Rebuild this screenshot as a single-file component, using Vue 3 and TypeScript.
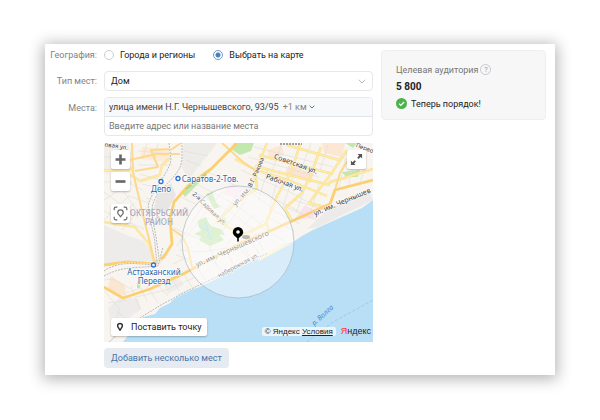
<script setup lang="ts">
import { ref } from 'vue'

const mode = ref<'cities' | 'map'>('map')
const placeType = ref('Дом')
const query = ref('')

const blocks: { d: string; fill: string }[] = [
  { d: 'M0 0H24L28 28 10 34 0 30Z', fill: '#f2efeb' },
  { d: 'M0 82L22 92 40 98 52 118 0 121Z', fill: '#eeecea' },
  { d: 'M54 48L67 40 72 52 62 70 50 66Z', fill: '#e7e6e5' },
  { d: 'M80 0H113L84 37 76 20Z', fill: '#eeece9' },
  { d: 'M7 133L21 142 22 153 3 147Z', fill: '#fbe6d2' },
  { d: 'M58 137L72 130 80 142 64 151Z', fill: '#f0eeea' },
  { d: 'M4 165L17 153 34 156 37 166 8 187Z', fill: '#edecea' },
  { d: 'M163 7L178 2 180 13 166 17Z', fill: '#fce8d6' },
  { d: 'M187 17L211 25 207 40 181 30Z', fill: '#fbe5d2' },
  { d: 'M218 0H241L238 14 220 10Z', fill: '#fbe7d4' },
  { d: 'M190 77L201 62 214 69 209 75Z', fill: '#f8e3ed' },
  { d: 'M226 65L266 50 269 57 214 84 203 86Z', fill: '#ecebea' },
  { d: 'M118 50L128 41 145 48 139 58Z', fill: '#f8e6ee' },
  { d: 'M38 4L68 6 64 19 36 16Z', fill: '#fdebd8' }
]

const parks: string[] = [
  'M93 78L102 74 106 83 117 86 121 92 110 91 101 95 90 91 98 87Z',
  'M94 82L103 78 112 88 120 97 106 103 95 97 99 91Z',
  'M102 51L108 49 112 59 116 64 110 66Z',
  'M114 77L121 75 123 83 117 82Z',
  'M238 29L256 27 254 34 242 34Z',
  'M241 0H253L249 5Z',
  'M130 0H150L147 8 136 12 127 6Z',
  'M33 139L37 136 36 145 33 145Z',
  'M78 50L100 29 103 32 81 54Z'
]

const streets: string[] = [
  'M0 39L22 38 38 47M0 57L28 39M0 68L40 86M0 77L25 53 45 60M9 34L32 66M0 49L34 74M10 84L30 60M18 87L38 63',
  'M36 31L56 37M38 41L56 45M42 55L55 59M34 8L71 11M43 0L39 16M54 0L51 15M34 22L68 22M8 0L20 12 17 28M0 14L26 15',
  'M80 8L104 13M82 17L97 23M75 53L112 71 142 91M83 45L127 69 151 88M91 40L132 62 158 82M104 29L149 51 169 66',
  'M80 97L119 48M93 103L133 53M104 108L141 58M117 108L151 70M129 110L160 77M73 103L109 47M70 85L90 94 113 99',
  'M76 107L97 109 123 105M72 112L98 121M69 121L81 115 92 127M76 96L83 109M105 103L113 125M122 106L129 121M137 98L145 113M151 91L159 107',
  'M137 27L158 37 184 48 211 63M137 43L172 57 195 68M153 23L145 48M164 26L154 58M176 27L165 67M190 31L178 66M204 37L192 70M216 38L207 68',
  'M144 14L215 34M150 4L229 24M178 0L166 35M207 0L197 27M224 2L216 27M235 14L262 22M241 17L235 45M250 18L244 44M262 20L256 40M226 38L268 27',
  'M190 57L220 67M184 65L213 77M165 75L190 88M170 68L196 81M158 84L181 99M147 98L158 115M136 105L148 120M109 116L121 132',
  'M22 150L37 145 43 158M27 143L36 166M43 143L54 160M53 141L64 153M67 134L75 148M78 128L88 144M94 125L101 137M32 154L62 147 94 133',
  'M0 147L16 167 8 187M12 168L29 181M4 160L23 157M8 136L27 146M0 137L9 136'
]

const roads: string[] = [
  'M0 27L22 29 30 24M22 29L36 38 56 32 58 22 66 15',
  'M0 79L31 84 45 101 51 121',
  'M151 25L153 45 133 59 118 74 113 80M97 60L122 83 138 91',
  'M163 0L153 25 151 40',
  'M131 16L152 27 184 37 223 53',
  'M151 23L177 30 226 42',
  'M155 12L229 31',
  'M196 1L188 27 173 53 162 80 166 88',
  'M217 4L206 34 197 51 181 65 188 78',
  'M243 7L229 28 205 60 225 65',
  'M183 2L235 17',
  'M138 92L162 81',
  'M224 40L269 26'
]

const arteries: string[] = [
  'M28 0L29 29 38 68 46 100 51 121',
  'M26 17L52 11 76 11M31 28L54 24 47 7 68 6 77 0',
  'M118 0L139 19 152 28',
  'M68 86L78 93 84 105 88 124',
  'M231 47L236 30 246 14'
]

const highways: string[] = [
  'M133 0L107 26 84 43 70 59 66 75 68 101 61 112 51 121',
  'M-4 142L19 155 46 146 79 131 105 117 137 100 166 88 188 78 226 61 231 47 269 37',
  'M0 122L23 119 50 121 61 113'
]

const railways: string[] = [
  'M78 -1V17C76 34 57 42 50 58C45 69 51 83 53 101L56 121',
  'M65 0L67 17C65 29 52 42 45 59C42 70 50 86 51 101L53 121',
  'M0 128C16 117 34 121 51 122',
  'M0 133C18 123 33 125 54 123L59 104',
  'M5 199L26 181 57 162 87 146 136 123 164 110'
]

const stations = [
  { x: 57, y: 38.5, lines: [{ text: 'Депо', x: 57, y: 48.5 }] },
  { x: 74, y: 35.5, lines: [{ text: 'Саратов-2-Тов.', x: 106, y: 38.5 }] },
  {
    x: 49.5,
    y: 122,
    lines: [
      { text: 'Астраханский', x: 50, y: 132 },
      { text: 'Переезд', x: 50, y: 141 }
    ]
  }
]

const streetNames = [
  { text: 'Советская ул.', x: 191, y: 23, angle: 20, size: 7 },
  { text: 'Рабочая ул.', x: 180, y: 42, angle: 20, size: 7 },
  { text: 'В.Г. Ракова', x: 154, y: 30, angle: -66, size: 6 },
  { text: 'ул. им.', x: 139, y: 55, angle: -48, size: 7 },
  { text: '2-я Садовая ул.', x: 104, y: 67, angle: 44, size: 6 },
  { text: 'ул. им. Чернышев', x: 239, y: 61, angle: -23, size: 7 },
  { text: 'ул. им. Чернышевского', x: 129, y: 108, angle: -24, size: 7 },
  { text: 'набережная ул.', x: 135, y: 124, angle: -28, size: 6 },
  { text: 'Перво', x: 260, y: 7, angle: 20, size: 6 },
  { text: 'овая ул.', x: 12, y: 5, angle: 8, size: 6 }
]
</script>

<template>
  <main class="panel">
    <form class="form" @submit.prevent>
      <span id="geo-label" class="label">География:</span>
      <div class="radios" role="radiogroup" aria-labelledby="geo-label">
        <label class="radio"><input v-model="mode" type="radio" name="geo" value="cities" />Города и регионы</label>
        <label class="radio"><input v-model="mode" type="radio" name="geo" value="map" />Выбрать на карте</label>
      </div>

      <label class="label" for="place-type">Тип мест:</label>
      <div class="select-wrap">
        <select id="place-type" v-model="placeType"><option>Дом</option></select>
        <svg class="select-arrow" viewBox="0 0 8 5"><path d="M.7.8 4 4 7.3.8" /></svg>
      </div>

      <label class="label" for="place-query">Места:</label>
      <div class="places">
        <div class="place">
          <span>улица имени Н.Г. Чернышевского, 93/95</span>
          <button type="button" class="radius">
            +1 км
            <svg viewBox="0 0 6 4"><path d="M.6.7 3 3 5.4.7" /></svg>
          </button>
        </div>
        <input id="place-query" v-model="query" type="text" placeholder="Введите адрес или название места" />
      </div>

      <section class="map">
        <svg class="canvas" viewBox="0 0 269 199" preserveAspectRatio="xMidYMid slice">
          <rect width="269" height="199" fill="#f8f5f0" />
          <path v-for="(b, i) in blocks" :key="'b' + i" :d="b.d" :fill="b.fill" />
          <path v-for="(p, i) in parks" :key="'p' + i" :d="p" fill="#c3e8ae" />
          <path d="M95 82L104 88 107 97M101 78L105 89" fill="none" stroke="#a9d8ee" stroke-width="1.500" />
          <path
            d="M269 57L258 65 231 77 209 87 198 93 189 99 179 102 164 110 136 124 106 139 93 145 85 146 73 152 66 160 56 165 51 171 39 174 30 185 19 199H269Z"
            fill="#b8dff5"
          />
          <path d="M189 100L179 102 153 115 155 118 179 105Z" fill="#fdf1c6" />
          <path v-for="(s, i) in streets" :key="'s' + i" :d="s" class="street" />
          <g v-for="(r, i) in roads" :key="'r' + i">
            <path :d="r" class="road-edge" />
            <path :d="r" class="road" />
          </g>
          <path v-for="(a, i) in arteries" :key="'a' + i" :d="a" class="artery" />
          <path v-for="(h, i) in highways" :key="'h' + i" :d="h" class="highway" />
          <path d="M82 46L102 31" fill="none" stroke="#a6cf7c" stroke-width="1.500" />
          <g v-for="(r, i) in railways" :key="'w' + i">
            <path :d="r" class="rail-bed" />
            <path :d="r" class="rail" />
          </g>
          <path d="M203 199L229 179 269 157" class="ferry" />
          <path d="M176 1H198" fill="none" stroke="#a5a29d" stroke-width="2" stroke-dasharray="2 1" />

          <text class="district" x="55" y="73">ОКТЯБРЬСКИЙ</text>
          <text class="district" x="55" y="82">РАЙОН</text>
          <text
            v-for="n in streetNames"
            :key="n.text"
            class="street-name"
            :font-size="n.size"
            :transform="`translate(${n.x} ${n.y}) rotate(${n.angle})`"
          >{{ n.text }}</text>
          <text class="river" transform="translate(220 174) rotate(-42)">р. Волга</text>

          <circle cx="134" cy="99" r="56" class="zone" />

          <g v-for="s in stations" :key="s.x">
            <circle :cx="s.x" :cy="s.y" r="2" class="stop" />
            <text v-for="l in s.lines" :key="l.text" class="station" :x="l.x" :y="l.y">{{ l.text }}</text>
          </g>

          <ellipse cx="142" cy="94" rx="4" ry="2" fill="#000" opacity=".25" />
          <path d="M134 84a5.200 5.200 0 0 1 5.200 5.200c0 3-3.500 4.800-4.400 6V98.500h-1.600v-3.300c-.9-1.200-4.400-3-4.400-6A5.200 5.200 0 0 1 134 84Z" />
          <circle cx="134" cy="89" r="1.800" fill="#fff" />
        </svg>

        <div class="zoom">
          <button type="button" class="tool" aria-label="Приблизить">
            <svg viewBox="0 0 18 18"><path d="M9 4.300v9.400M4.300 9h9.400" stroke="#666" stroke-width="2.500" /></svg>
          </button>
          <button type="button" class="tool" aria-label="Отдалить">
            <svg viewBox="0 0 18 18"><path d="M4.300 9h9.400" stroke="#666" stroke-width="2.500" /></svg>
          </button>
        </div>
        <button type="button" class="tool locate" aria-label="Показать точку">
          <svg viewBox="0 0 18 18" fill="none" stroke="#666" stroke-width="1.100">
            <path d="M3 6V4.500Q3 3 4.500 3H6M12 3h1.500Q15 3 15 4.500V6M15 12v1.500Q15 15 13.500 15H12M6 15H4.500Q3 15 3 13.500V12" />
            <path d="M9 5.600a2.600 2.600 0 0 1 2.600 2.600C11.600 9.900 9.500 10.400 9 12.400 8.500 10.400 6.400 9.900 6.400 8.200A2.600 2.600 0 0 1 9 5.600Z" />
          </svg>
        </button>
        <button type="button" class="tool expand" aria-label="Развернуть карту">
          <svg viewBox="0 0 18 18" fill="#555">
            <path d="M9.900 3.700H14.300V8.100L12.900 6.700 10.900 8.500 9.700 7.300 11.500 5.200Z" />
            <path d="M3.700 9.900V14.300H8.100L6.700 12.900 8.500 10.900 7.300 9.700 5.200 11.500Z" />
          </svg>
        </button>
        <button type="button" class="put-point">
          <svg viewBox="0 0 8 10">
            <path d="M4 1.400a2.400 2.400 0 0 1 2.400 2.400C6.400 5.500 4.500 6.500 4 8.600 3.500 6.500 1.600 5.500 1.600 3.800A2.400 2.400 0 0 1 4 1.400Z" fill="#fff" stroke="#333" stroke-width="1.500" />
          </svg>
          Поставить точку
        </button>
        <div class="credits">
          <span class="terms">© Яндекс <a href="#">Условия</a></span>
          <span class="brand"><b>Я</b>ндекс</span>
        </div>
      </section>

      <button type="button" class="add-many">Добавить несколько мест</button>
    </form>

    <aside class="audience">
      <div class="audience-title">
        Целевая аудитория
        <button type="button" class="help" aria-label="Подсказка">?</button>
      </div>
      <strong class="count">5 800</strong>
      <div class="status">
        <svg viewBox="0 0 11 11">
          <circle cx="5.500" cy="5.500" r="5.500" fill="#4bb34b" />
          <path d="M3 5.600 4.800 7.400 8.100 4" fill="none" stroke="#fff" stroke-width="1.300" />
        </svg>
        Теперь порядок!
      </div>
    </aside>
  </main>
</template>

<style>
body {
  background: #fff;
}
</style>

<style scoped>
.panel {
  display: grid;
  grid-template-columns: 1fr 165px;
  gap: 8px;
  align-items: start;
  box-sizing: border-box;
  margin: 44px 45px;
  padding: 6px 9px 7px 0;
  background: #fff;
  box-shadow: 0 2px 14px 2px rgba(0, 0, 0, 0.3);
  font: 9px/10px Roboto, "Liberation Sans", sans-serif;
  color: #222;
}

button,
input,
select {
  box-sizing: border-box;
  margin: 0;
  padding: 0;
  border: 0;
  background: none;
  font: inherit;
  color: inherit;
}

button {
  cursor: pointer;
}

svg {
  display: block;
}

.form {
  display: grid;
  grid-template-columns: 52px minmax(0, 1fr);
  column-gap: 7px;
}

.label {
  color: #828282;
  text-align: right;
  white-space: nowrap;
}

.radios {
  display: flex;
  gap: 18px;
  margin-bottom: 11px;
}

.radio {
  display: flex;
  align-items: center;
  gap: 6px;
  white-space: nowrap;
}

.radio input {
  width: 10px;
  height: 10px;
  appearance: none;
  border: 1px solid #c9ced5;
  border-radius: 50%;
}

.radio input:checked {
  border-color: #6f9bcf;
  background: radial-gradient(circle, #4a7fc0 2px, transparent 3px);
}

.label[for="place-type"] {
  padding-top: 5px;
}

.label[for="place-query"] {
  padding-top: 6px;
}

.select-wrap {
  position: relative;
  margin-bottom: 6px;
}

.select-wrap select {
  display: block;
  width: 100%;
  height: 20px;
  padding: 0 6px;
  appearance: none;
  border: 1px solid #e6e8eb;
  border-radius: 4px;
}

.select-arrow {
  position: absolute;
  top: 8px;
  right: 7px;
  width: 8px;
  height: 5px;
  fill: none;
  stroke: #b3b7bd;
  pointer-events: none;
}

.places {
  margin-bottom: 7px;
  overflow: hidden;
  border: 1px solid #e6e8eb;
  border-radius: 4px;
}

.place {
  display: flex;
  align-items: center;
  gap: 4px;
  height: 19px;
  box-sizing: border-box;
  padding: 0 4px;
  border-bottom: 1px solid #e0e5ec;
  background: #f8f9fb;
  color: #444;
  white-space: nowrap;
}

.radius {
  display: flex;
  align-items: center;
  gap: 2px;
  color: #828282;
}

.radius svg {
  width: 6px;
  height: 4px;
  fill: none;
  stroke: #777;
}

.places input {
  display: block;
  width: 100%;
  height: 18px;
  padding: 0 4px;
}

.places input::placeholder {
  color: #777;
  opacity: 1;
}

.map {
  position: relative;
  grid-column: 2;
  margin-bottom: 6px;
  overflow: hidden;
}

.canvas {
  width: 100%;
  height: auto;
}

.canvas text {
  font-family: "Noto Sans", "Open Sans", sans-serif;
  text-anchor: middle;
}

.street,
.road,
.road-edge,
.artery,
.highway,
.rail,
.rail-bed,
.ferry {
  fill: none;
  stroke-linejoin: round;
}

.street {
  stroke: #dfddd9;
  stroke-width: 0.6;
}

.road-edge {
  stroke: #f7dc93;
  stroke-width: 2.4;
}

.road {
  stroke: #ffeba3;
  stroke-width: 1.6;
}

.artery {
  stroke: #fcd98c;
  stroke-width: 2;
}

.highway {
  stroke: #fccf73;
  stroke-width: 2.8;
}

.rail-bed {
  stroke: #f8f6f3;
  stroke-width: 1.6;
}

.rail {
  stroke: #a9a9a9;
  stroke-width: 0.8;
  stroke-dasharray: 2 1;
}

.ferry {
  stroke: #98b9e6;
  stroke-width: 0.7;
  stroke-dasharray: 3 2;
}

.canvas .district {
  font-size: 8px;
  font-weight: 500;
  fill: #a9a8c4;
}

.canvas .street-name {
  fill: #3c3c3c;
  stroke: #fff;
  stroke-width: 1.5;
  stroke-opacity: 0.6;
  paint-order: stroke;
}

.canvas .river {
  font-size: 7px;
  font-style: italic;
  fill: #4a85cc;
}

.canvas .station {
  font-size: 8px;
  fill: #2866b5;
  stroke: #fff;
  stroke-width: 1.5;
  stroke-opacity: 0.8;
  paint-order: stroke;
}

.stop {
  fill: #fff;
  stroke: #2a72d4;
  stroke-width: 1.3;
}

.zone {
  fill: #fff;
  fill-opacity: 0.45;
  stroke: #a9b4c0;
  stroke-width: 0.7;
}

.zoom {
  position: absolute;
  top: 7px;
  left: 7px;
  display: grid;
  gap: 3px;
}

.tool,
.put-point {
  border-radius: 2px;
  background: #fff;
  box-shadow: 0 1px 2px rgba(0, 0, 0, 0.25);
}

.tool {
  width: 19px;
  height: 19px;
}

.tool svg {
  width: 100%;
}

.locate {
  position: absolute;
  top: 61px;
  left: 7px;
}

.expand {
  position: absolute;
  top: 7px;
  right: 7px;
}

.put-point {
  position: absolute;
  bottom: 6px;
  left: 7px;
  display: flex;
  align-items: center;
  gap: 7px;
  height: 18px;
  padding: 0 5px;
  white-space: nowrap;
}

.put-point svg {
  width: 8px;
  height: 10px;
}

.credits {
  position: absolute;
  right: 2px;
  bottom: 6px;
  display: flex;
  align-items: center;
  gap: 5px;
  font: 8px/9px "Liberation Sans", sans-serif;
  white-space: nowrap;
}

.terms {
  padding: 0 3px;
  border-radius: 2px;
  background: rgba(255, 255, 255, 0.7);
}

.terms a {
  color: inherit;
}

.brand {
  font-size: 9px;
}

.brand b {
  font-weight: 400;
  color: #f33;
}

.add-many {
  grid-column: 2;
  justify-self: start;
  height: 20px;
  padding: 0 7px;
  border-radius: 4px;
  background: #e5ebf1;
  color: #4a76a8;
}

.audience {
  display: grid;
  gap: 6px;
  padding: 13px 14px 10px;
  border: 1px solid #efefef;
  border-radius: 4px;
  background: #f7f7f7;
}

.audience-title {
  display: flex;
  align-items: center;
  gap: 2px;
  color: #777;
  white-space: nowrap;
}

.help {
  width: 11px;
  height: 11px;
  border: 1px solid #c3c9d1;
  border-radius: 50%;
  font-size: 8px;
  line-height: 9px;
  color: #9aa3ad;
}

.count {
  font-size: 10px;
  line-height: 11px;
  font-weight: 700;
}

.status {
  display: flex;
  align-items: center;
  gap: 4px;
}

.status svg {
  width: 11px;
  height: 11px;
}
</style>
